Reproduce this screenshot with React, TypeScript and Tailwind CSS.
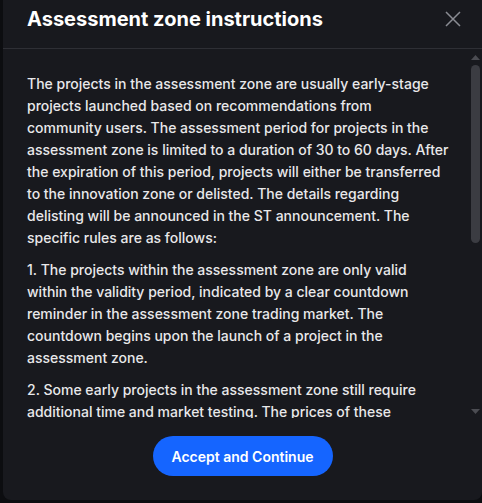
const paragraphs = [
  "The projects in the assessment zone are usually early-stage projects launched based on recommendations from community users. The assessment period for projects in the assessment zone is limited to a duration of 30 to 60 days. After the expiration of this period, projects will either be transferred to the innovation zone or delisted. The details regarding delisting will be announced in the ST announcement. The specific rules are as follows:",
  "1. The projects within the assessment zone are only valid within the validity period, indicated by a clear countdown reminder in the assessment zone trading market. The countdown begins upon the launch of a project in the assessment zone.",
  "2. Some early projects in the assessment zone still require additional time and market testing. The prices of these projects may fluctuate significantly, so please pay attention to the risks and trade rationally.",
];

export default function App() {
  return (
    <div
      className="flex h-[503px] w-[482px] bg-[#0c0d10] pl-[3px] pb-[3px]"
      style={{ fontFamily: "Inter, 'Noto Sans', sans-serif" }}
    >
      <div className="flex min-w-0 flex-1 flex-col rounded-b-lg bg-[#18191e]">
        <div className="flex h-[49px] shrink-0 items-start justify-between border-b border-[#2e2f35] pl-6 pr-[21px] pt-[5px]">
          <h2 className="text-[20px] font-bold leading-7 text-white">
            Assessment zone instructions
          </h2>
          <button className="mt-[6px] text-[#8a8c93]">
            <svg width="16" height="16" viewBox="0 0 16 16" fill="none">
              <path d="M1 1L15 15M15 1L1 15" stroke="currentColor" strokeWidth="1.5" />
            </svg>
          </button>
        </div>
        <div className="flex min-h-0 flex-1">
          <div className="min-w-0 flex-1 overflow-hidden pl-6 pr-[21px] pt-6">
            {paragraphs.map((text, i) => (
              <p key={i} className="mb-[10px] text-[14px] font-medium leading-[22px] text-[#e8e8ea]">
                {text}
              </p>
            ))}
          </div>
          {/* scrollbar */}
          <div className="flex w-3 shrink-0 flex-col items-center pb-[4px] pl-px pr-[2px] pt-[6px]">
            <svg width="9" height="5" viewBox="0 0 9 5">
              <path d="M0 5L4.5 0L9 5Z" fill="#4b4c52" />
            </svg>
            <div className="mt-[5px] h-[178px] w-[9px] rounded-full bg-[#3b3c42]" />
            <div className="flex-1" />
            <svg width="9" height="5" viewBox="0 0 9 5">
              <path d="M0 0L9 0L4.5 5Z" fill="#4b4c52" />
            </svg>
          </div>
        </div>
        <div className="flex shrink-0 justify-center pb-6 pt-[18px]">
          <button className="h-10 w-[180px] rounded-full bg-[#1565ff] text-[14px] font-semibold text-white">
            Accept and Continue
          </button>
        </div>
      </div>
    </div>
  );
}
